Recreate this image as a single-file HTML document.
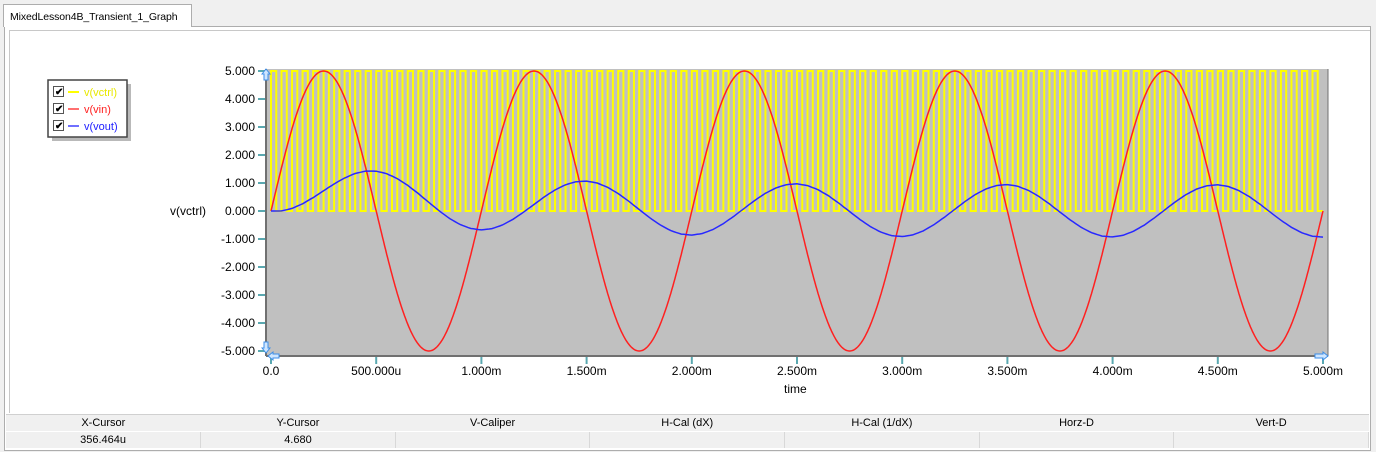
<!DOCTYPE html>
<html><head><meta charset="utf-8">
<style>
html,body{margin:0;padding:0;background:#f0f0f0;width:1376px;height:452px;overflow:hidden;font-family:"Liberation Sans",sans-serif;}
#tab{position:absolute;left:3px;top:4px;width:189px;height:23px;background:#fff;border:1px solid #adadad;border-bottom:none;font-size:10.5px;line-height:24px;padding-left:6px;box-sizing:border-box;color:#000;z-index:2;white-space:nowrap;letter-spacing:-0.1px}
#panel{position:absolute;left:4px;top:26px;width:1367px;height:425px;background:#fff;border:1px solid #adadad;box-sizing:border-box}
#inner{position:absolute;left:9px;top:30px;width:1360px;height:382px;border-left:1px solid #c8c8c8;border-top:1px solid #c8c8c8;}
table{position:absolute;left:6px;top:414px;border-collapse:collapse;font-size:11px;width:1363px;table-layout:fixed}
td{height:16px;padding:0;text-align:center;background:#f0f0f0;color:#000}
tr.h td{border-top:1px solid #d0d0d0;border-bottom:1px solid #fff}
tr.v td{border-right:1px solid #d8d8d8;height:16px}
</style></head><body>
<div id="tab">MixedLesson4B_Transient_1_Graph</div>
<div id="panel"></div>
<div id="inner"></div>
<svg id="g" width="1376" height="452" style="position:absolute;left:0;top:0" xmlns="http://www.w3.org/2000/svg">
<rect x="52" y="84" width="79" height="57" fill="#8a8a8a" opacity="0.6"/>
<rect x="48" y="80" width="79" height="57" fill="#fff" stroke="#444" stroke-width="1.5"/>
<g font-size="11">
<rect x="53.5" y="86.5" width="10" height="10" fill="#fff" stroke="#555"/><text x="55" y="95" font-size="10" font-weight="bold">✔</text>
<line x1="68" y1="92" x2="79" y2="92" stroke="#ffff00" stroke-width="2"/><text x="84" y="96" fill="#e8e800">v(vctrl)</text>
<rect x="53.5" y="103.5" width="10" height="10" fill="#fff" stroke="#555"/><text x="55" y="112" font-size="10" font-weight="bold">✔</text>
<line x1="68" y1="109" x2="79" y2="109" stroke="#ff7070" stroke-width="2"/><text x="84" y="113" fill="#ff2020">v(vin)</text>
<rect x="53.5" y="120.5" width="10" height="10" fill="#fff" stroke="#555"/><text x="55" y="129" font-size="10" font-weight="bold">✔</text>
<line x1="68" y1="126" x2="79" y2="126" stroke="#7070ff" stroke-width="2"/><text x="84" y="130" fill="#2020ff">v(vout)</text>
</g>
<rect x="266" y="69" width="1062" height="287" fill="#c0c0c0"/>
<line x1="266" y1="69" x2="266" y2="356" stroke="#707070" stroke-width="2"/>
<line x1="266" y1="356" x2="1328" y2="356" stroke="#707070" stroke-width="2"/>
<line x1="1328" y1="69" x2="1328" y2="356" stroke="#707070" stroke-width="1"/>
<g id="ticks" font-size="12" fill="#000"></g>
<path id="yel" fill="none" stroke="#ffff00" stroke-width="2"/>
<path id="red" fill="none" stroke="#ff2020" stroke-width="1.5"/>
<path id="blu" fill="none" stroke="#2828ff" stroke-width="1.5"/>
<text x="170" y="215" font-size="12">v(vctrl)</text>
<text x="784" y="393" font-size="12">time</text>
<path d="M262 74 l4 -5 l4 5 h-2 v6 h-4 v-6z" fill="#cfe6ff" stroke="#3d8ee8"/>
<path d="M262 348 l4 5 l4 -5 h-2 v-6 h-4 v6z" fill="#cfe6ff" stroke="#3d8ee8"/>
<path d="M268 356 l5 -4 v2 h6 v4 h-6 v2z" fill="#cfe6ff" stroke="#3d8ee8"/>
<path d="M1328 356 l-5 -4 v2 h-8 v4 h8 v2z" fill="#cfe6ff" stroke="#3d8ee8"/>
</svg>
<table>
<tr class="h"><td>X-Cursor</td><td>Y-Cursor</td><td>V-Caliper</td><td>H-Cal (dX)</td><td>H-Cal (1/dX)</td><td>Horz-D</td><td>Vert-D</td></tr>
<tr class="v"><td>356.464u</td><td>4.680</td><td></td><td></td><td></td><td></td><td></td></tr>
</table>
<script>
var X=function(t){return 271+t*210.4;},Y=function(v){return 211-v*28;};
var tk=document.getElementById("ticks"),s="";
for(var i=0;i<=10;i++){var v=5-i,y=Y(v);s+='<line x1="258" y1="'+y+'" x2="265" y2="'+y+'" stroke="#5aa8b0" stroke-width="2"/>';
s+='<text x="255" y="'+(y+4)+'" text-anchor="end">'+v.toFixed(3)+'</text>';}
var lab=["0.0","500.000u","1.000m","1.500m","2.000m","2.500m","3.000m","3.500m","4.000m","4.500m","5.000m"];
for(var i=0;i<=10;i++){var x=X(i*0.5);s+='<line x1="'+x+'" y1="357" x2="'+x+'" y2="364" stroke="#5aa8b0" stroke-width="2"/>';
s+='<text x="'+x+'" y="375" text-anchor="middle">'+lab[i]+'</text>';}
tk.innerHTML=s;
var p="M"+X(0)+" "+Y(0);
for(var k=0;k<100;k++){var a=X(k*0.05),b=X(k*0.05+0.025),c=X(k*0.05+0.05);
p+=" L"+a+" "+Y(5)+" L"+b+" "+Y(5)+" L"+b+" "+Y(0)+" L"+c+" "+Y(0);}
document.getElementById("yel").setAttribute("d",p);
p="";for(var t=0;t<=5.0001;t+=0.005){p+=(t?" L":"M")+X(t).toFixed(1)+" "+Y(5*Math.sin(2*Math.PI*t)).toFixed(1);}
document.getElementById("red").setAttribute("d",p);
var tau=0.78,v=0,dt=0.001,hold=0;p="M"+X(0)+" "+Y(0);
for(var n=0;n<=5000;n++){var t=n*dt;if(n%50==0)hold=5*Math.sin(2*Math.PI*t);
v+=(hold-v)/tau*dt;
if(n%25==0){p+=" L"+X(t).toFixed(1)+" "+Y(v*0.93).toFixed(1);}
if(n%25==12){p+=" L"+X(t).toFixed(1)+" "+Y(v*0.93).toFixed(1);}
}
document.getElementById("blu").setAttribute("d",p);
</script>
</body></html>
